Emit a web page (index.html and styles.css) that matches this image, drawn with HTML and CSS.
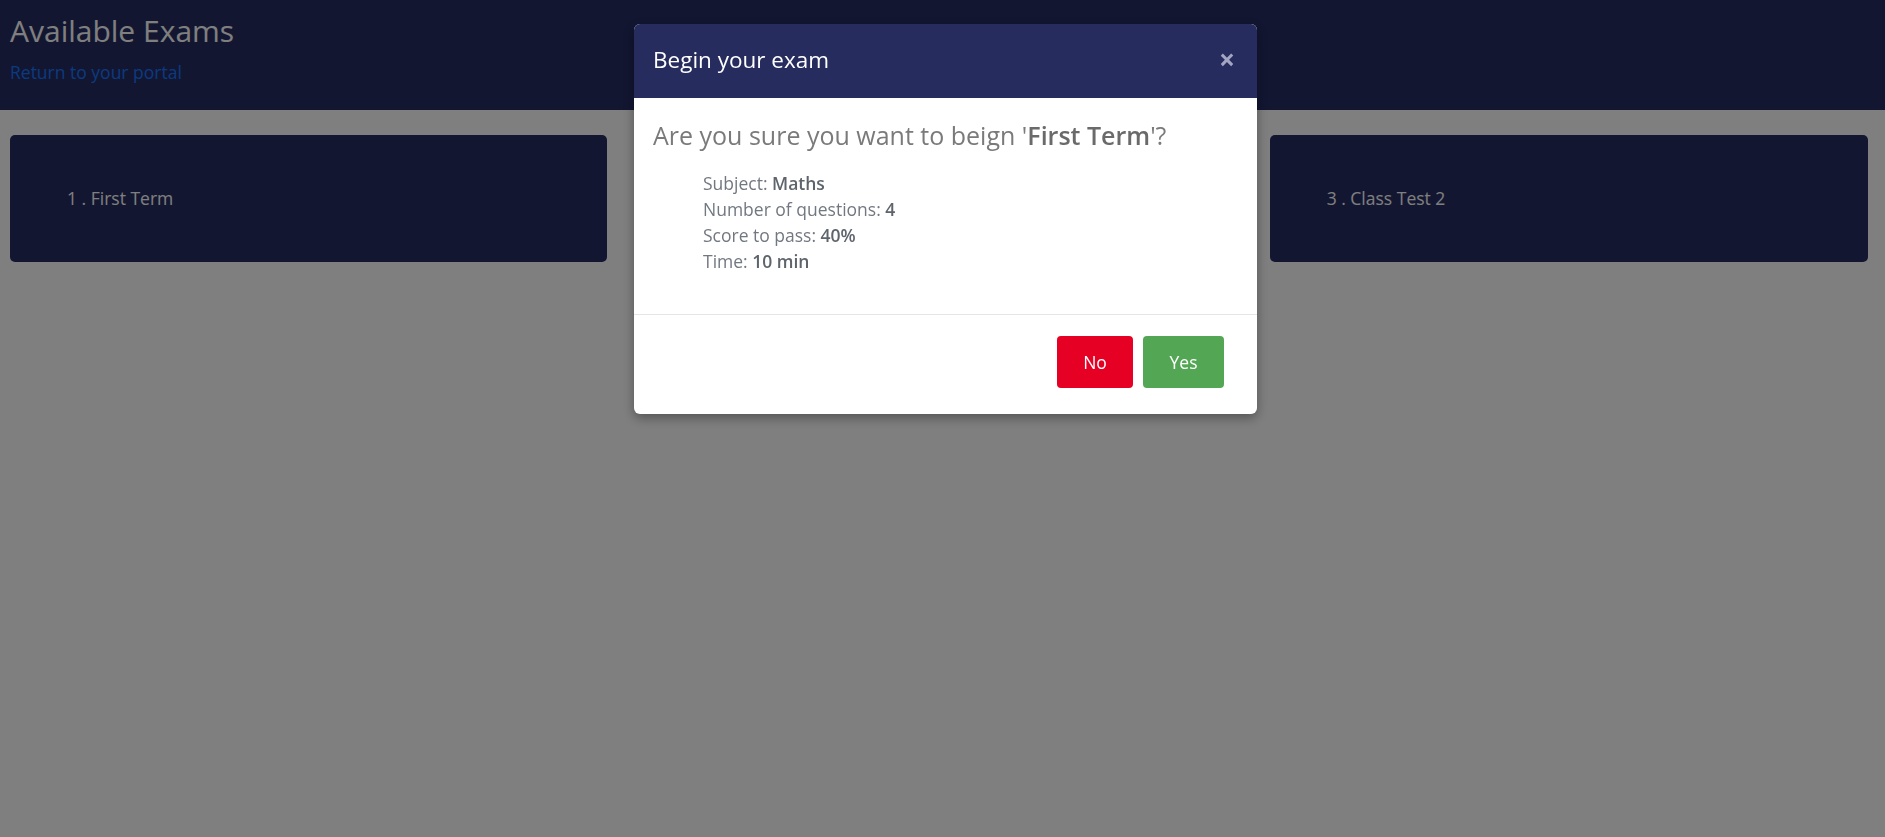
FILE: index.html
```html
<!DOCTYPE html>
<html lang="en">
<head>
<meta charset="utf-8">
<title>Available Exams</title>
<link rel="stylesheet" href="styles.css">
</head>
<body>
  <header class="topbar">
    <h3 class="page-title">Available Exams</h3>
    <a class="portal-link" href="#">Return to your portal</a>
  </header>

  <main class="exams">
    <div class="exam-card">1 . First Term</div>
    <div class="exam-card"></div>
    <div class="exam-card">3 . Class Test 2</div>
  </main>

  <div class="backdrop"></div>

  <div class="modal">
    <div class="modal-dialog">
      <div class="modal-content">
        <div class="modal-header">
          <h4 class="modal-title">Begin your exam</h4>
          <span class="close">&times;</span>
        </div>
        <div class="modal-body">
          <h4 class="question">Are you sure you want to beign '<b>First Term</b>'?</h4>
          <ul class="details">
            <li>Subject: <b>Maths</b></li>
            <li>Number of questions: <b>4</b></li>
            <li>Score to pass: <b>40%</b></li>
            <li>Time: <b>10 min</b></li>
          </ul>
        </div>
        <div class="modal-footer">
          <button class="btn btn-no">No</button>
          <button class="btn btn-yes">Yes</button>
        </div>
      </div>
    </div>
  </div>
</body>
</html>
```

FILE: styles.css
```css
* { box-sizing: border-box; }

html, body { height: 100%; }

body {
  margin: 0;
  padding-right: 17px;
  font-family: "Open Sans", "Noto Sans", sans-serif;
  font-size: 17.5px;
  line-height: 1.42857;
  background: #ffffff;
  color: #333;
}

.topbar {
  background: #262c62;
  height: 110px;
  padding: 14px 10px 0;
  margin-right: -17px;
}

.page-title {
  margin: 0;
  font-size: 30px;
  font-weight: 400;
  line-height: 33px;
  color: #ffffff;
}

.portal-link {
  display: inline-block;
  margin-top: 13px;
  color: #1675ff;
  text-decoration: none;
  line-height: 25px;
}

.exams {
  display: grid;
  grid-template-columns: repeat(3, 1fr);
  gap: 33px;
  padding: 25px 0 0 10px;
}

.exam-card {
  background: #262c62;
  color: #ffffff;
  height: 127px;
  border-radius: 5px;
  padding-left: 57px;
  display: flex;
  align-items: center;
}

.exam-card:last-child {
  margin-left: -1px;
}

.backdrop {
  position: fixed;
  inset: 0;
  background: rgba(0, 0, 0, 0.5);
}

.modal {
  position: fixed;
  inset: 0;
}

.modal-dialog {
  width: 623px;
  margin: 24px 0 0 634px;
}

.modal-content {
  background: #ffffff;
  border-radius: 6px;
  overflow: hidden;
  box-shadow: 0 4px 12px rgba(0, 0, 0, 0.35);
}

.modal-header {
  background: #272c5f;
  height: 74px;
  padding: 0 22px 4px 19px;
  display: flex;
  align-items: center;
  justify-content: space-between;
}

.modal-title {
  margin: 0;
  font-size: 22.5px;
  font-weight: 400;
  line-height: 25px;
  color: #ffffff;
}

.close {
  font-size: 28px;
  font-weight: 700;
  line-height: 1;
  color: #a3a6c3;
}

.modal-body {
  padding: 22px 19px 40px;
}

.question {
  margin: 0;
  font-size: 25px;
  font-weight: 400;
  line-height: 30px;
  color: #7a7a7a;
}

.question b {
  font-weight: 600;
  color: #6a6a6a;
}

.details {
  list-style: none;
  margin: 20px 0 0;
  padding-left: 50px;
  color: #727880;
  line-height: 26px;
}

.details b {
  font-weight: 600;
  color: #5e646c;
}

.modal-footer {
  border-top: 1px solid #e5e5e5;
  padding: 21px 33px 26px;
  display: flex;
  justify-content: flex-end;
  gap: 10px;
}

.btn {
  height: 52px;
  border: none;
  border-radius: 4px;
  font-family: inherit;
  font-size: 17.5px;
  color: #ffffff;
  padding: 0 26px;
}

.btn-no {
  background: #e60023;
  width: 76px;
}

.btn-yes {
  background: #53a654;
  width: 81px;
}
```
